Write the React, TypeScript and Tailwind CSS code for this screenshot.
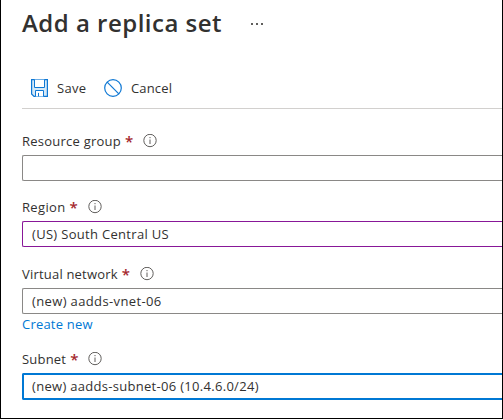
import React from 'react';

function InfoIcon() {
  return (
    <svg className="block h-[14px] w-[14px] shrink-0" viewBox="0 0 14 14" fill="none">
      <circle cx="7" cy="6.5" r="6.2" stroke="#605e5c" strokeWidth="1" />
      <path d="M7 5.5v4.5M7 3v1.2" stroke="#605e5c" strokeWidth="1" />
    </svg>
  );
}

function SaveIcon() {
  return (
    <svg className="block h-[18px] w-[17px]" viewBox="0 0 17 18" fill="none" stroke="#0f78d4">
      <path d="M.6.6h15.8v16.8H3L.6 15z" fill="#d5e9f8" strokeWidth="1.2" />
      <path d="M3.5.6v7.9h10V.6" fill="#fff" />
      <path d="M4.5 17.4v-5.9h8v5.9M7.5 17.4v-3.5" fill="#fff" />
    </svg>
  );
}

function CancelIcon() {
  return (
    <svg className="block h-[18px] w-[18px]" viewBox="0 0 18 18" fill="none" stroke="#0f78d4" strokeWidth="1.2">
      <circle cx="9" cy="9" r="8.3" />
      <path d="M3.2 3.2l11.6 11.6" />
    </svg>
  );
}

type FieldProps = {
  label: string;
  labelStyle: string;
  value?: string;
  valueStyle?: string;
  box: string;
};

function Field({ label, labelStyle, value, valueStyle = '', box }: FieldProps) {
  return (
    <div>
      <div className="flex h-5 items-center">
        <span className={`whitespace-nowrap ${labelStyle}`}>{label}</span>
        <span className="w-[22px] shrink-0 pl-1 text-[15px] font-semibold text-[#a4262c]">*</span>
        <InfoIcon />
      </div>
      <div className={`flex items-center rounded-l-[2px] border-r-0 ${box}`}>
        <span className={`whitespace-nowrap ${valueStyle}`}>{value}</span>
      </div>
    </div>
  );
}

export default function App() {
  return (
    <div className="h-[419px] w-[503px] overflow-hidden border-x border-b border-black bg-white pl-[21px] font-['Open_Sans','Noto_Sans',sans-serif] text-[13px] leading-5 text-[#323130]">
      <header className="flex h-[68px] items-start pt-[7px]">
        <h1 className="w-[229px] whitespace-nowrap text-[24px] font-semibold leading-8 tracking-[0.49px]">Add a replica set</h1>
        <div className="flex gap-[3px] pt-[16px]">
          <i className="size-[2px] bg-[#605e5c]" />
          <i className="size-[2px] bg-[#605e5c]" />
          <i className="size-[2px] bg-[#605e5c]" />
        </div>
      </header>
      <div className="flex h-[41px] items-center border-b border-[#d2d0ce] pl-[9px]">
        <SaveIcon />
        <span className="ml-[9px] w-[47px] tracking-[0.3px]">Save</span>
        <CancelIcon />
        <span className="ml-[9px] tracking-[0.15px]">Cancel</span>
      </div>
      <main className="pt-[22px]">
        <Field label="Resource group" labelStyle="tracking-[0.24px]" box="mt-[4px] h-[26px] border border-[#8a8886] pl-[9px]" />
        <div className="mt-[16px]">
          <Field label="Region" labelStyle="tracking-[0.35px]" value="(US) South Central US" valueStyle="tracking-[0.31px]" box="mt-[4px] h-[26px] border border-[#881798] pl-[9px]" />
        </div>
        <div className="mt-[17px]">
          <Field label="Virtual network" labelStyle="tracking-[0.2px]" value="(new) aadds-vnet-06" valueStyle="tracking-[0.37px]" box="mt-[4px] h-[26px] border border-[#8a8886] pl-[9px]" />
        </div>
        <a className="block h-[20px] tracking-[0.2px] text-[#0078d4]">Create new</a>
        <div className="mt-[15px]">
          <Field label="Subnet" labelStyle="tracking-[0.2px]" value="(new) aadds-subnet-06 (10.4.6.0/24)" valueStyle="tracking-[0.3px]" box="mt-[4px] h-[27px] border-2 border-[#0078d4] pb-[2px] pl-[8px]" />
        </div>
      </main>
    </div>
  );
}
